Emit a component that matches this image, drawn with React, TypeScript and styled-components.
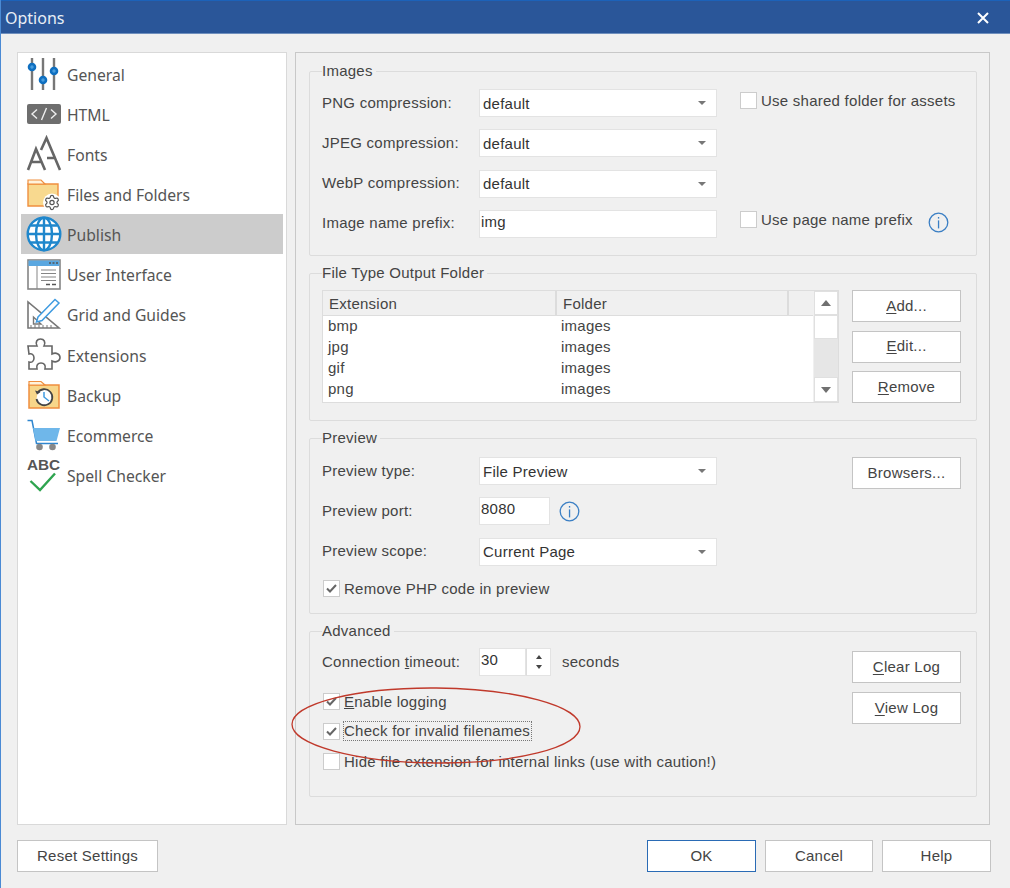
import React from 'react';
import styled, { createGlobalStyle } from 'styled-components';
import { Settings } from 'lucide-react';

const Global = createGlobalStyle`
html, body { margin: 0; padding: 0; background: #f0f0f0; }
* { box-sizing: border-box; }
`;

const Window = styled.div`
position: relative;
width: 1010px;
height: 888px;
background: #f0f0f0;
border-left: 1px solid #4a8ad4;
font-family: "Liberation Sans", Arial, sans-serif;
font-size: 15px;
letter-spacing: 0.25px;
color: #444;
overflow: hidden;
`;

const TitleBar = styled.div`
display: flex;
align-items: center;
justify-content: space-between;
height: 34px;
margin-left: -1px;
padding: 2px 21px 0 5px;
background: #2a5699;
border-top: 1px solid #1c62b9;
border-bottom: 1px solid #6f8fbd;
color: #e8eef6;
font-family: "Noto Sans", sans-serif;
font-size: 16px;
letter-spacing: 0;
`;

const Body = styled.div`
display: flex;
gap: 8px;
padding: 18px 19px 0 16px;
`;

const Sidebar = styled.ul`
list-style: none;
margin: 0;
padding: 0.5px 3px;
width: 270px;
height: 773px;
background: #fff;
border: 1px solid #d9d9d9;
`;

const SideItem = styled.li<{ $active?: boolean }>`
display: flex;
align-items: center;
gap: 6px;
height: 40.15px;
padding-left: 6px;
font-family: "Noto Sans", sans-serif;
font-size: 15.7px;
letter-spacing: 0;
color: #555;
background: ${p => (p.$active ? '#cccccc' : 'transparent')};
`;

const SideName = styled.span`
margin-top: 2px;
`;

const IconSlot = styled.span`
display: flex;
align-items: center;
justify-content: center;
width: 34px;
height: 34px;
flex: none;
svg { flex: none; overflow: visible; }
`;

const Panel = styled.div`
width: 695px;
height: 773px;
padding: 9px 12px 0 13px;
border: 1px solid #c8c8c8;
display: flex;
flex-direction: column;
gap: 8px;
`;

const Group = styled.fieldset<{ $h: number }>`
margin: 0;
padding: 0 15px 0 12px;
height: ${p => p.$h}px;
border: 1px solid #dcdcdc;
border-radius: 2px;
min-width: 0;
`;

const Legend = styled.legend`
padding: 0 3px 0 0;
line-height: 18px;
color: #444;
`;

const Split = styled.div<{ $top: number }>`
display: flex;
justify-content: space-between;
padding-top: ${p => p.$top}px;
`;

const Rows = styled.div`
display: flex;
flex-direction: column;
gap: 12.3px;
`;

const AdvRows = styled.div`
display: flex;
flex-direction: column;
gap: 12px;
`;

const Row = styled.div<{ $after?: number }>`
display: flex;
align-items: center;
height: 28px;
margin-bottom: ${p => p.$after ?? 0}px;
`;

const RowLabel = styled.span`
width: 157px;
flex: none;
padding-bottom: 2px;
`;

const Select = styled.div`
position: relative;
display: flex;
align-items: center;
width: 238px;
height: 28px;
padding-left: 3px;
background: #fff;
border: 1px solid #e3e3e3;
color: #333;
&::after {
  content: '';
  position: absolute;
  right: 10px;
  top: 11px;
  border-left: 4px solid transparent;
  border-right: 4px solid transparent;
  border-top: 4px solid #777;
}
`;

const Input = styled.div<{ $w: number }>`
display: flex;
align-items: center;
width: ${p => p.$w}px;
height: 28px;
padding: 0 0 5px 1px;
background: #fff;
border: 1px solid #e3e3e3;
color: #333;
`;

const SideChecks = styled.div`
display: flex;
flex-direction: column;
justify-content: space-between;
width: 221px;
height: 139px;
padding-top: 2px;
`;

const CheckRow = styled.label<{ $inset?: boolean; $before?: number }>`
display: flex;
align-items: center;
gap: 4px;
height: 18px;
margin-left: ${p => (p.$inset ? 1 : 0)}px;
margin-top: ${p => p.$before ?? 0}px;
`;

const Box = styled.span`
display: flex;
align-items: center;
justify-content: center;
width: 17px;
height: 17px;
flex: none;
background: #fff;
border: 1px solid #ccc;
`;

const Focus = styled.span`
outline: 1px dotted #777;
padding: 0 1px 0 0;
line-height: 18px;
`;

const InfoWrap = styled.span<{ $left: number; $top?: number }>`
display: flex;
margin-left: ${p => p.$left}px;
margin-top: ${p => p.$top ?? 0}px;
`;

const Btn = styled.button<{ $w?: number; $primary?: boolean }>`
width: ${p => p.$w ?? 109}px;
height: 32px;
padding: 0 0 2px;
background: #fff;
border: 1px solid ${p => (p.$primary ? '#2a6bb5' : '#c4c4c4')};
font: inherit;
letter-spacing: inherit;
color: #444;
u { text-underline-offset: 2px; text-decoration-thickness: 1px; }
`;

const BtnCol = styled.div<{ $gap: number; $top?: number }>`
display: flex;
flex-direction: column;
gap: ${p => p.$gap}px;
padding-top: ${p => p.$top ?? 0}px;
`;

const Table = styled.div`
display: flex;
width: 517px;
height: 113px;
border: 1px solid #ddd;
background: #fff;
`;

const TableMain = styled.div`
flex: 1;
`;

const TableHead = styled.div`
display: grid;
grid-template-columns: 234px 232px 1fr;
height: 25px;
background: #f0f0f0;
border-bottom: 1px solid #ddd;
`;

const HeadCell = styled.div`
display: flex;
align-items: center;
padding-left: 6px;
border-right: 2px solid #dcdcdc;
color: #444;
&:last-child { border-right: 0; }
`;

const TableRow = styled.div`
display: grid;
grid-template-columns: 233px 1fr;
height: 21px;
line-height: 20px;
padding-left: 5px;
color: #444;
`;

const Scroll = styled.div`
display: flex;
flex-direction: column;
width: 25px;
background: #e8e8e8;
border-left: 1px solid #f0f0f0;
`;

const ScrollBtn = styled.div<{ $h: number; $grey?: boolean }>`
display: flex;
align-items: center;
justify-content: center;
height: ${p => p.$h}px;
background: ${p => (p.$grey ? '#e6e6e6' : '#fff')};
border: ${p => (p.$grey ? 'none' : '1px solid #e0e0e0')};
`;

const Arrow = styled.span<{ $up?: boolean }>`
border-left: 5px solid transparent;
border-right: 5px solid transparent;
${p => (p.$up ? 'border-bottom: 6px solid #707070;' : 'border-top: 6px solid #707070;')}
`;

const Spin = styled.div`
display: flex;
flex-direction: column;
align-items: center;
justify-content: center;
gap: 6px;
width: 25px;
height: 28px;
background: #fff;
border: 1px solid #e3e3e3;
border-left: 1px solid #ddd;
`;

const SmallArrow = styled.span<{ $up?: boolean }>`
border-left: 3.5px solid transparent;
border-right: 3.5px solid transparent;
${p => (p.$up ? 'border-bottom: 4px solid #444;' : 'border-top: 4px solid #444;')}
`;

const Seconds = styled.span`
margin-left: 11px;
padding-bottom: 2px;
`;

const Footer = styled.div`
display: flex;
justify-content: space-between;
padding: 15px 19px 0 16px;
`;

const FooterRight = styled.div`
display: flex;
gap: 9px;
`;

const Ring = styled.svg`
position: absolute;
left: 279px;
top: 680px;
pointer-events: none;
`;

const Check = () => (
  <svg width="13" height="11" viewBox="0 0 13 11">
    <path d="M2 5.5 L5 8.5 L11 2" fill="none" stroke="#666" strokeWidth="2" />
  </svg>
);

const Info = () => (
  <svg width="21" height="21" viewBox="0 0 21 21">
    <circle cx="10.5" cy="10.5" r="9.3" fill="none" stroke="#3b7fc4" strokeWidth="1.3" />
    <rect x="9.9" y="5" width="1.3" height="1.6" fill="#3b7fc4" />
    <rect x="9.9" y="8.4" width="1.3" height="8" fill="#3b7fc4" />
  </svg>
);

const icons: Record<string, React.ReactNode> = {
  General: (
    <svg width="34" height="34" viewBox="0 0 34 34">
      <path d="M5 1V33M16 1V33M27 1V33" stroke="#777" strokeWidth="2.4" />
      <g fill="#4a9ede" stroke="#0f6fc0" strokeWidth="2.6">
        <circle cx="5" cy="10" r="3" /><circle cx="16" cy="23" r="3" /><circle cx="27" cy="14" r="3" />
      </g>
    </svg>
  ),
  HTML: (
    <svg width="34" height="34" viewBox="0 0 34 34">
      <rect x="0" y="7" width="34" height="20" rx="2" fill="#6e6e6e" />
      <path d="M10 12.5L5 17L10 21.5M24 12.5L29 17L24 21.5M19.5 11L14.5 23" fill="none" stroke="#eee" strokeWidth="1.4" />
    </svg>
  ),
  Fonts: (
    <svg width="34" height="34" viewBox="0 0 34 34">
      <path d="M1 33L9 12L18 33M4 25H14M14 13L19.5 1L33 33M20 21H29" fill="none" stroke="#666" strokeWidth="2.6" />
    </svg>
  ),
  'Files and Folders': (
    <svg width="34" height="34" viewBox="0 0 34 34">
      <path d="M1 7H31V29H1Z" fill="#f8d98f" stroke="#ef8f3f" strokeWidth="1.4" />
      <path d="M1 7V3H14L18 7Z" fill="#fff3dc" stroke="#ef8f3f" strokeWidth="1.2" />
      <circle cx="25" cy="25.500" r="9" fill="#fff" />
      <Settings x={16.5} y={17} size={17} color="#555" strokeWidth={1.7} />
    </svg>
  ),
  Publish: (
    <svg width="36" height="36" viewBox="0 0 36 36">
      <g fill="none" stroke="#1f87cc" strokeWidth="2.400">
        <circle cx="18" cy="18" r="16.300" fill="#fff" />
        <ellipse cx="18" cy="18" rx="8" ry="16.300" />
        <path d="M18 2V34M2 18H34M4.500 9.500H31.500M4.500 26.500H31.500" />
      </g>
    </svg>
  ),
  'User Interface': (
    <svg width="34" height="34" viewBox="0 0 34 34">
      <rect x="1" y="3" width="32" height="29" fill="#fff" stroke="#858585" strokeWidth="1.6" />
      <rect x="1.500" y="3.500" width="31" height="5.500" fill="#5aa7e0" />
      <path d="M10 9V32M14 13H29M14 16.500H29M14 20H29M14 23.500H29" stroke="#858585" strokeWidth="1" />
      <path d="M19 27.500H23M25 27.500H29M22 6H24M25.500 6H27.500M29 6H31" stroke="#555" strokeWidth="1.400" />
    </svg>
  ),
  'Grid and Guides': (
    <svg width="34" height="34" viewBox="0 0 34 34">
      <path d="M1 5V31H32Z" fill="#fff" stroke="#777" strokeWidth="1.600" />
      <path d="M6.500 20V27H14Z" fill="none" stroke="#777" strokeWidth="1.400" />
      <path d="M4 28V31M8 28V31M12 28V31M16 28V31M20 28V31M24 28V31" stroke="#777" strokeWidth="1" />
      <path d="M11 20L28 2.500L32 6L15 23.500L9.500 25Z" fill="#fff" stroke="#3f9be0" strokeWidth="1.500" />
    </svg>
  ),
  Extensions: (
    <svg width="34" height="34" viewBox="0 0 34 34">
      <path d="M1 8H10C8 4 10 1 13.500 1C17 1 19 4 17 8H25V16C29 14 33 16 33 19.500C33 23 29 25 25 23V31H18C19 27 17 25 14 25C11 25 9 27 10 31H2V24C5 25 7 23 7 20C7 17 5 15 2 16Z" fill="#fff" stroke="#666" strokeWidth="1.600" />
    </svg>
  ),
  Backup: (
    <svg width="34" height="34" viewBox="0 0 34 34">
      <path d="M2 7H32V30H2Z" fill="#f7d68a" stroke="#ef8f3f" strokeWidth="1.500" />
      <path d="M2 7V3.500H14L18 7Z" fill="#fff3dc" stroke="#ef8f3f" strokeWidth="1.200" />
      <path d="M10.500 15A8 8 0 1 1 9.500 21" fill="#fff" stroke="#444" strokeWidth="1.800" />
      <path d="M8 12.500L10 16.500L13.500 14Z" fill="#444" />
      <path d="M17 14V19L22 23" fill="none" stroke="#3f9be0" strokeWidth="1.500" />
    </svg>
  ),
  Ecommerce: (
    <svg width="34" height="34" viewBox="0 0 34 34">
      <path d="M0.500 2.500H5L9.500 25.500H31" fill="none" stroke="#2f86cf" strokeWidth="1.500" />
      <path d="M6 10H33L29.500 23H8.500Z" fill="#6fb7ea" />
      <circle cx="12.500" cy="29" r="3.300" fill="#888" />
      <circle cx="25.500" cy="29" r="3.300" fill="#888" />
    </svg>
  ),
  'Spell Checker': (
    <svg width="34" height="34" viewBox="0 0 34 34">
      <text x="0" y="12" fontFamily="Liberation Sans, sans-serif" fontWeight="700" fontSize="15.300" letterSpacing="0" fill="#555">ABC</text>
      <path d="M3.500 23L13 32L28 15.500" fill="none" stroke="#2ea44f" strokeWidth="2.400" />
    </svg>
  ),
};

const sideNames = Object.keys(icons);

const files = ['bmp', 'jpg', 'gif', 'png'];

export default function App() {
  return (
    <Window>
      <Global />
      <TitleBar>
        <span>Options</span>
        <svg width="12" height="12" viewBox="0 0 12 12">
          <path d="M1 1L11 11M11 1L1 11" stroke="#fff" strokeWidth="2" />
        </svg>
      </TitleBar>
      <Body>
        <Sidebar>
          {sideNames.map(n => (
            <SideItem key={n} $active={n === 'Publish'}>
              <IconSlot>{icons[n]}</IconSlot>
              <SideName>{n}</SideName>
            </SideItem>
          ))}
        </Sidebar>
        <Panel>
          <Group $h={194}>
            <Legend>Images</Legend>
            <Split $top={9}>
              <Rows>
                <Row><RowLabel>PNG compression:</RowLabel><Select>default</Select></Row>
                <Row><RowLabel>JPEG compression:</RowLabel><Select>default</Select></Row>
                <Row><RowLabel>WebP compression:</RowLabel><Select>default</Select></Row>
                <Row><RowLabel>Image name prefix:</RowLabel><Input $w={238}>img</Input></Row>
              </Rows>
              <SideChecks>
                <CheckRow><Box />Use shared folder for assets</CheckRow>
                <CheckRow><Box />Use page name prefix<InfoWrap $left={11} $top={6}><Info /></InfoWrap></CheckRow>
              </SideChecks>
            </Split>
          </Group>
          <Group $h={157}>
            <Legend>File Type Output Folder</Legend>
            <Split $top={8}>
              <Table>
                <TableMain>
                  <TableHead>
                    <HeadCell>Extension</HeadCell>
                    <HeadCell>Folder</HeadCell>
                    <HeadCell />
                  </TableHead>
                  {files.map(f => (
                    <TableRow key={f}><span>{f}</span><span>images</span></TableRow>
                  ))}
                </TableMain>
                <Scroll>
                  <ScrollBtn $h={24}><Arrow $up /></ScrollBtn>
                  <ScrollBtn $h={24} />
                  <ScrollBtn $h={38} $grey />
                  <ScrollBtn $h={25}><Arrow /></ScrollBtn>
                </Scroll>
              </Table>
              <BtnCol $gap={8.5}>
                <Btn><u>A</u>dd...</Btn>
                <Btn><u>E</u>dit...</Btn>
                <Btn><u>R</u>emove</Btn>
              </BtnCol>
            </Split>
          </Group>
          <Group $h={185}>
            <Legend>Preview</Legend>
            <Split $top={10}>
              <Rows>
                <Row><RowLabel>Preview type:</RowLabel><Select>File Preview</Select></Row>
                <Row><RowLabel>Preview port:</RowLabel><Input $w={71}>8080</Input><InfoWrap $left={9}><Info /></InfoWrap></Row>
                <Row><RowLabel>Preview scope:</RowLabel><Select>Current Page</Select></Row>
                <CheckRow $inset $before={2}><Box><Check /></Box>Remove PHP code in preview</CheckRow>
              </Rows>
              <Btn>Browsers...</Btn>
            </Split>
          </Group>
          <Group $h={175}>
            <Legend>Advanced</Legend>
            <Split $top={8}>
              <AdvRows>
                <Row $after={4}>
                  <RowLabel>Connection <u>t</u>imeout:</RowLabel>
                  <Input $w={47}>30</Input>
                  <Spin><SmallArrow $up /><SmallArrow /></Spin>
                  <Seconds>seconds</Seconds>
                </Row>
                <CheckRow $inset><Box><Check /></Box><span><u>E</u>nable logging</span></CheckRow>
                <CheckRow $inset><Box><Check /></Box><Focus>Check for invalid filenames</Focus></CheckRow>
                <CheckRow $inset><Box />Hide file extension for internal links (use with caution!)</CheckRow>
              </AdvRows>
              <BtnCol $gap={9} $top={3}>
                <Btn><u>C</u>lear Log</Btn>
                <Btn><u>V</u>iew Log</Btn>
              </BtnCol>
            </Split>
          </Group>
        </Panel>
      </Body>
      <Footer>
        <Btn $w={141}>Reset Settings</Btn>
        <FooterRight>
          <Btn $primary>OK</Btn>
          <Btn $w={108}>Cancel</Btn>
          <Btn>Help</Btn>
        </FooterRight>
      </Footer>
      <Ring width="320" height="100" viewBox="0 0 320 100">
        <ellipse cx="156" cy="45.500" rx="144" ry="37.500" fill="none" stroke="#c0392b" strokeWidth="1.300" transform="rotate(0.5 156 45.500)" />
      </Ring>
    </Window>
  );
}
